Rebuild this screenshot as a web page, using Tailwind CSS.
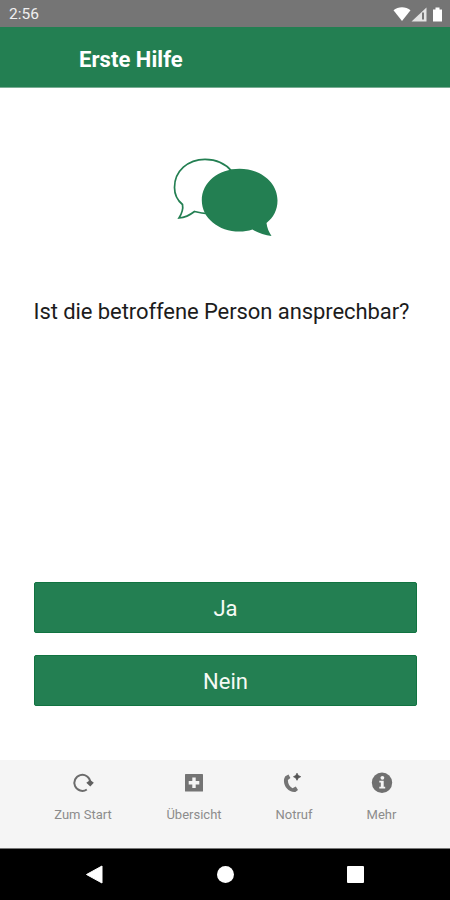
<!DOCTYPE html>
<html lang="de">
<head>
<meta charset="utf-8">
<title>Erste Hilfe</title>
<script src="https://cdn.jsdelivr.net/npm/@tailwindcss/browser@4"></script>
</head>
<body class="bg-white">
<div class="flex h-[900px] w-[450px] flex-col overflow-hidden bg-white font-[Roboto,sans-serif]">
  <div class="flex h-[27px] shrink-0 items-center justify-between bg-[#757575] pt-[2px] pr-[6px] pl-[9px]">
    <span class="text-[15.5px] leading-none text-[#f0f0f0]">2:56</span>
    <svg class="h-[18px] w-[52px]" viewBox="392 5 52 18" fill="#fff">
      <path d="M393.5 9.2C398 5.3 406 5.3 410.5 9.2L402 20Z"/>
      <path d="M426.500 6.500V20.500H411.500Z" fill="#e4e4e4"/>
      <path d="M423 11.500V18.500" stroke="#777" stroke-width="2"/>
      <path d="M433 8.500H435.500V6.500H439.500V8.500H442V20.500H433Z"/>
    </svg>
  </div>
  <header class="flex h-[61px] shrink-0 items-center border-b border-[#7aad94] bg-[#237f52] pt-[5px] pl-[79px]">
    <h1 class="text-[22px] leading-none font-bold tracking-[0.05px] text-white">Erste Hilfe</h1>
  </header>
  <main class="flex h-[672px] shrink-0 flex-col px-[33.500px] pt-[62px]">
    <svg class="h-[100px] w-[130px] self-center" viewBox="160 150 130 100">
      <path d="M182.500 204.500C177 200 174.500 194 174.500 187.500C174.500 171 188 159.300 205 159.300C217 159.300 226 164 232 171.500L210 213.500C205 214 202 213.500 194.500 211.500C190 215 184.500 217.500 179 218C181.500 214 183.500 209.500 182.500 204.500Z" fill="#fff" stroke="#237f52" stroke-width="1.700"/>
      <path d="M239.500 168.800C260.500 168.800 277.500 182.500 277.500 200.500C277.500 210 273.500 217.500 266.500 223C267 228 269 232 271.500 236C265 235 257 232.500 252.500 229.500C248 231 244 231.500 239.500 231.500C218.500 231.500 201.800 218 201.800 200.200C201.800 182.500 218.500 168.800 239.500 168.800Z" fill="#237f52"/>
    </svg>
    <p class="mt-[48px] text-[22px] leading-[28px] tracking-[-0.075px] whitespace-nowrap text-[#1c1c1c]">Ist die betroffene Person ansprechbar?</p>
    <div class="mt-auto mb-[54px] flex flex-col gap-[22px]">
      <button class="h-[51px] rounded-[2px] border border-[#117341] bg-[#237f52] pt-[2px] pl-[1px] text-[22px] leading-none text-[#f6faf5]">Ja</button>
      <button class="h-[51px] rounded-[2px] border border-[#117341] bg-[#237f52] pt-[2px] pl-[1px] text-[22px] leading-none text-[#f6faf5]">Nein</button>
    </div>
  </main>
  <nav class="flex h-[89px] shrink-0 border-b border-[#777] bg-[#f5f5f5] pt-[11px] pl-[27px] text-[13px] leading-[21px] text-[#8c8c8c]">
    <div class="flex w-[112px] flex-col items-center gap-[9px]">
      <svg class="h-6 w-6" viewBox="0 0 24 24"><path d="M15.800 18.500A8 8 0 1 1 19.300 11" fill="none" stroke="#6c6c6c" stroke-width="2"/><path d="M15.300 11.700L19.300 9L22.800 11.700L19.300 15.600Z" fill="#606060"/></svg>
      <span>Zum Start</span>
    </div>
    <div class="flex w-[110px] flex-col items-center gap-[9px]">
      <svg class="h-6 w-6" viewBox="0 0 24 24"><rect x="3" y="3" width="18" height="17.500" rx=".6" fill="#747474"/><path d="M12 6.500V17M6.700 11.800H17.300" stroke="#f5f5f5" stroke-width="3.400"/></svg>
      <span>Übersicht</span>
    </div>
    <div class="flex w-[90px] flex-col items-center gap-[9px]">
      <svg class="h-6 w-6" viewBox="0 0 24 24"><path d="M3.300 5.200L6.500 3.500L8.400 7L5.900 9C5.800 12.500 7.500 15.600 10.500 17.300L13.800 15.600L16 18.900L13.400 21C5.500 22-1 12 3.300 5.200Z" fill="#747474"/><path d="M15 2.200L16.200 4.500L18.700 5.700L16.200 6.900L15 9.300L13.800 6.900L11.500 5.700L13.800 4.500Z" fill="#555" stroke="#555" stroke-width=".8"/></svg>
      <span>Notruf</span>
    </div>
    <div class="flex w-[85px] flex-col items-center gap-[9px]">
      <svg class="h-6 w-6" viewBox="0 0 24 24"><circle cx="12" cy="11.800" r="10.200" fill="#707070"/><circle cx="12.400" cy="6.800" r="1.900" fill="#f5f5f5"/><path d="M9.300 9.800H13.700V15.800H15.200V17.600H9.300V15.800H10.800V11.500H9.300Z" fill="#f5f5f5"/></svg>
      <span>Mehr</span>
    </div>
  </nav>
  <div class="flex h-[51px] shrink-0 items-center justify-between bg-black pr-[86px] pl-[85px]">
    <svg class="h-[20px] w-[18px]" viewBox="0 0 18 20"><path d="M1.500 9.500L17 1V18Z" fill="#fff" stroke="#fff" stroke-linejoin="round"/></svg>
    <div class="h-[17px] w-[17px] rounded-full bg-white"></div>
    <div class="h-[17px] w-[17px] rounded-[1px] bg-white"></div>
  </div>
</div>
</body>
</html></script>
